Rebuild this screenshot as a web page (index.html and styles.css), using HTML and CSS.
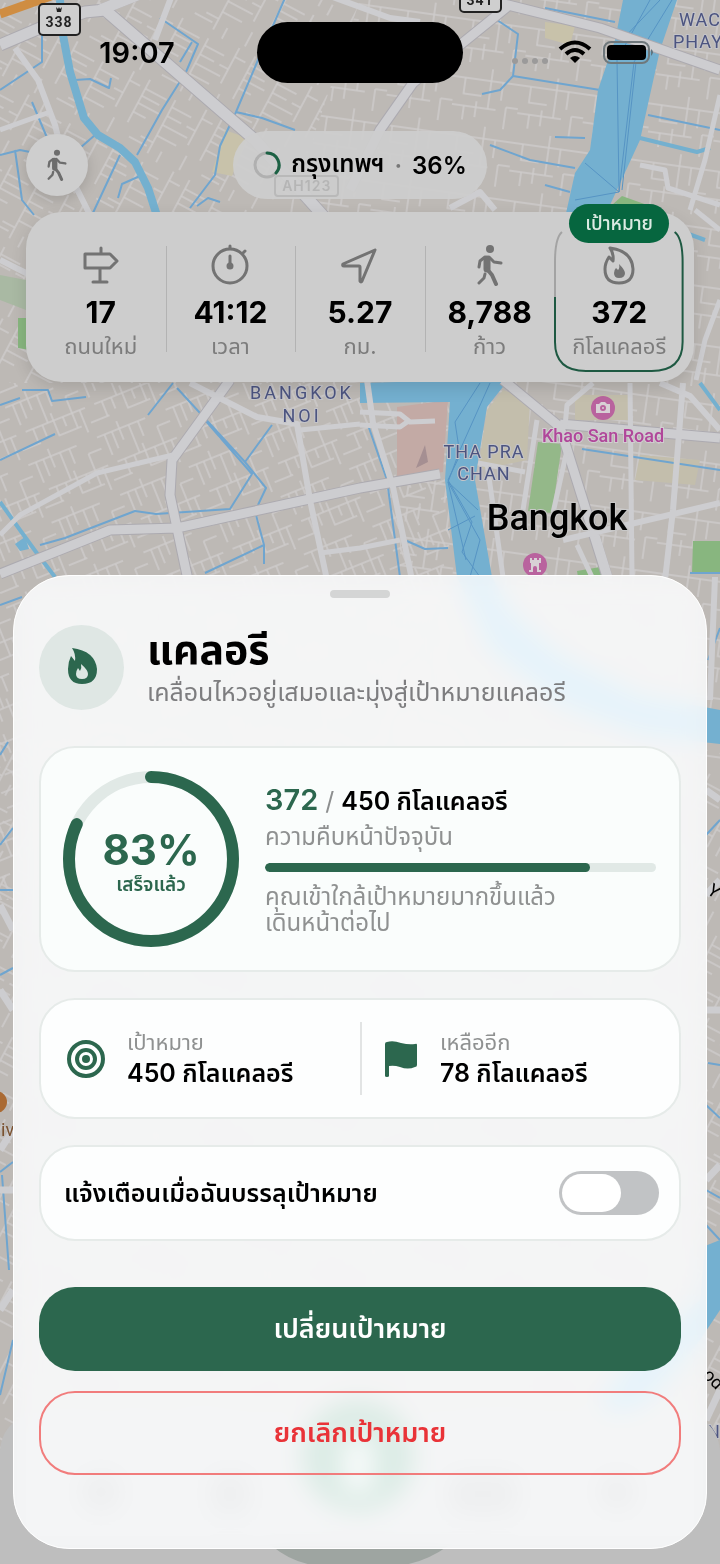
FILE: index.html
```
<!DOCTYPE html>
<html lang="th">
<head>
    <meta charset="UTF-8">
    <meta name="viewport" content="width=device-width, initial-scale=1">
    <title>แคลอรี</title>
    <link rel="stylesheet" href="styles.css">
</head>
<body>
<svg width="0" height="0" class="defs" aria-hidden="true">
    <symbol id="icon-walk" viewBox="0 0 26 42">
        <circle cx="13" cy="5" r="4" fill="currentColor"/>
        <g fill="none" stroke="currentColor" stroke-linecap="round" stroke-linejoin="round">
            <path d="M10 15 L10 25" stroke-width="7"/>
            <path d="M8 13 L3 17 L2 23" stroke-width="3"/>
            <path d="M12 13 L17 18 L24 19" stroke-width="3"/>
            <path d="M10 25 L15 31 L19 40" stroke-width="4"/>
            <path d="M8 30 L7 34 L2 39" stroke-width="3"/>
        </g>
    </symbol>
</svg>
<div class="screen">
    <svg class="map" viewBox="0 0 720 1564" preserveAspectRatio="xMidYMin slice" aria-hidden="true">
        <defs>
            <pattern id="lanes-a" width="74" height="62" patternUnits="userSpaceOnUse" patternTransform="rotate(-22)">
                <path class="lane" d="M0 8 H52 M8 8 V30 M16 8 V26 M24 0 V20 M34 8 V38 M44 8 V24 M10 38 H74 M18 38 V54 M28 38 V50 M40 30 V54 H64 M50 38 V48 M60 20 V54 M60 20 H74 M68 38 V62 M0 54 H20"/>
            </pattern>
            <pattern id="lanes-b" width="82" height="70" patternUnits="userSpaceOnUse" patternTransform="rotate(28)">
                <path class="lane" d="M6 0 V48 M6 10 H30 M6 18 H26 M6 26 H30 M6 36 H20 M38 6 V66 M38 14 H60 M38 24 H54 M38 34 H66 M38 46 H60 M24 54 H38 M70 0 V40 M70 10 H82 M60 24 H70 M14 60 H34 M50 58 V70 M74 50 V66"/>
            </pattern>
            <pattern id="lanes-c" width="66" height="58" patternUnits="userSpaceOnUse" patternTransform="rotate(8)">
                <path class="lane" d="M0 12 H66 M10 12 V28 H28 M36 0 V40 M48 12 V30 M0 40 H44 M12 40 V54 M24 34 V50 M54 36 H66 M54 36 V58"/>
            </pattern>
        </defs>
        <rect width="720" height="1564" fill="#bdb9b5"/>
        <!-- side streets, one pattern per part of town -->
        <path fill="url(#lanes-b)" d="M0 0 H360 L230 383 H0 Z"/>
        <path fill="url(#lanes-c)" d="M360 0 H720 V383 H230 Z"/>
        <path fill="url(#lanes-a)" d="M0 383 H450 V900 H0 Z"/>
        <path fill="url(#lanes-c)" d="M400 383 H720 V760 H400 Z"/>
        <path fill="url(#lanes-b)" d="M0 740 H720 V1564 H0 Z"/>
        <!-- parks and districts -->
        <g>
            <path fill="#c8c2aa" d="M225 130 L247 138 L232 176 L212 172 Z M545 22 L575 26 L570 45 L545 38 Z"/>
            <path fill="#c3beac" d="M503 390 L530 400 L527 460 L478 470 L487 410 Z M575 395 H630 V420 H575 Z M640 455 L700 460 L695 485 L635 480 Z"/>
            <path fill="#c3aaa5" d="M397 407 L448 400 L443 472 L397 479 Z"/>
            <path fill="#a58f92" d="M425 445 L428 462 L416 468 Z"/>
            <path fill="#88b67f" d="M18 318 H30 V350 L18 348 Z M693 541 H720 V573 H692 Z M577 571 L600 567 L602 577 H578 Z M612 205 L622 196 L650 206 Z"/>
            <path fill="#a9b9a3" d="M0 275 L26 280 V310 L0 300 Z"/>
            <path fill="#94b889" d="M538 442 L562 444 L552 513 L528 511 Z"/>
        </g>
        <!-- canals -->
        <g class="canal">
            <path d="M42 30 V62 L0 90 M75 80 L90 79 L109 88 L111 78 M95 135 L80 148 M160 18 L198 44 L186 72 L162 110 L137 155 M192 42 L180 62"/>
            <path d="M285 -2 L258 60 L236 112 L220 146 L215 175 L190 208 M236 112 L262 118 L295 130"/>
            <path d="M0 155 L20 150 L45 155 M15 150 L22 200 L34 215 M32 102 L48 140 M120 155 L92 215 M140 176 L122 184 L118 198 M197 206 L208 198 L220 202"/>
            <path d="M497 20 L518 34 L513 76 L500 90 L482 94 M513 76 L600 90 M545 8 L615 22 M648 115 L720 130 M555 137 L585 138 M490 145 L530 160 L575 168 M545 185 L570 192"/>
            <path d="M0 405 L20 398 M22 390 H48 L52 401 L86 397 M0 460 L55 434 M173 383 L148 415 M177 388 L245 462 L266 488 L258 505 M205 420 L252 474 L230 509 L156 514 L135 511 L65 538 L40 545 M272 425 L245 462 M256 515 L264 545 L205 573 M264 545 V564"/>
            <path d="M368 425 L387 480 L400 577 M407 541 L425 549 L448 548 M582 449 L720 470 M690 573 H720"/>
            <path d="M0 605 L22 597 M0 755 L8 742 M0 845 L13 828 M0 890 H13 M0 975 L13 968 M0 1172 L13 1162 M2 1175 L9 1270 M0 1395 L13 1340 M708 660 L720 628 M706 835 L720 820 M708 1063 L720 1065 M706 1105 L720 1118 M706 1190 L720 1198 M706 1225 L720 1240"/>
        </g>
        <path class="canal-wide" d="M60 0 L62 30 L70 72 L84 118 L98 135 L120 148 L135 162 L148 188 L160 225"/>
        <path class="canal-wide thin" d="M615 205 L645 218 L705 240 M700 383 L720 410 M640 138 L697 152 L710 148 M0 502 L20 530 L36 552 L55 577"/>
        <path class="water" d="M15 544 L25 537 L29 549 L20 551 Z"/>
        <!-- river -->
        <path class="water" d="M623 0 L615 40 L598 90 L590 150 L575 173 L560 240 L500 340 L470 380 L360 383 V403 L450 402 L445 480 L457 577 L490 650 L560 705 L640 735 L720 744 V710 L640 695 L560 655 L510 610 L492 577 L475 480 L487 407 L540 340 L610 205 L640 140 L660 50 L677 0 Z"/>
        <path class="water" d="M720 1240 L705 1246 L700 1300 L640 1350 L600 1400 L610 1420 L650 1400 L700 1340 L720 1310 Z"/>
        <g class="ferry">
            <path d="M650 0 L617 60 L619 192 M672 0 L634 62 L619 192 M660 0 L620 42 M619 192 L585 163 M619 192 L575 200 M636 62 L622 190"/>
            <path d="M480 383 L455 422 L460 455 L448 480 L472 522 L462 552 L480 577 M490 383 L460 450 L448 482 L480 540 L470 577 M448 482 L478 510 M448 482 L466 560 M448 530 L475 516"/>
        </g>
        <!-- main roads -->
        <g class="road-edge">
            <path stroke-width="13" d="M0 45 L40 28 L85 12 L105 10 L255 140 L345 240"/>
            <path d="M100 10 L140 -6 M500 3 L600 28 L720 70 M507 7 L413 83 L380 130 L350 190 M0 574 L110 530 L177 528 L360 488 L440 474 M230 380 L172 460 L170 495 L188 580 M503 380 L560 427 L608 580 M560 424 L720 438"/>
        </g>
        <g class="road">
            <path stroke-width="11" d="M0 45 L40 28 L85 12 L105 10 L255 140 L345 240 M100 10 L140 -6"/>
            <path stroke-width="9" d="M500 3 L600 28 L720 70 M507 7 L413 83 L380 130 L350 190 M0 574 L110 530 L177 528 L360 488 L440 474 M230 380 L172 460 L170 495 L188 580 M503 380 L560 427 L608 580 M560 424 L720 438"/>
            <path stroke-width="6" d="M15 48 L38 80 L55 125 L65 165 L95 225 M172 -5 L155 40 M190 383 L257 417 L297 424 L310 500 L327 580 M367 380 L373 423 L393 487 L412 580 M683 383 L673 510 L665 580 M660 383 L690 396 L720 430 M563 540 L720 503 M715 577 L710 700 M0 260 L30 275 M450 208 L480 192 L495 210 M330 -4 L390 18 L420 22"/>
            <path stroke-width="5" d="M0 130 L50 112 M0 535 L20 515 L97 473 L173 455 M300 430 L360 424 M537 420 L523 510 M567 450 L553 513 M630 383 L632 577 M487 463 L503 577 M478 463 L525 472 M593 383 L567 405 L565 427 M640 165 L665 170 L668 188 L720 205 M720 95 L705 160 L690 210 M695 210 L720 230 M696 380 L705 340 L720 300 M360 412 L400 414 L410 422 L435 421 M360 425 L400 427 L410 420 M320 553 L360 548 L400 540 M577 545 L592 577 M597 535 L610 577"/>
            <path stroke-width="7" d="M0 905 L13 930 M0 990 L13 1010 M0 1150 L13 1130 M0 1190 H13 M0 1310 L13 1290 M706 790 L720 800 M706 895 L720 880 M706 1010 H720 M706 1180 L720 1165 M706 1420 L720 1390"/>
        </g>
        <path d="M0 14 L65 -9" stroke="#cf8d42" stroke-width="9" fill="none"/>
        <!-- road shields -->
        <g class="shield">
            <rect x="39" y="4" width="41" height="31" rx="4"/>
            <text x="59" y="27">338</text>
            <path d="M56 7 l2 2 l1 -2 l1 2 l2 -2 l-1 5 h-4 Z" fill="#222" stroke="none"/>
            <rect x="460" y="-19" width="41" height="31" rx="4"/>
            <text x="480" y="5">341</text>
        </g>
        <!-- place names -->
        <g class="place">
            <text x="302" y="399" letter-spacing="3">BANGKOK</text>
            <text x="302" y="422" letter-spacing="3">NOI</text>
            <text x="484" y="458">THA PRA</text>
            <text x="484" y="480">CHAN</text>
            <text x="700" y="26">WAC</text>
            <text x="698" y="48">PHAY</text>
            <text x="714" y="1438">N</text>
        </g>
        <text class="poi" x="603" y="442">Khao San Road</text>
        <text class="city" x="557" y="530">Bangkok</text>
        <text class="poi-food" x="1" y="1136">iv</text>
        <text class="street" x="706" y="893" transform="rotate(35 706 893)">Y</text>
        <text class="street" x="702" y="1376" transform="rotate(45 702 1376)">od</text>
        <g fill="#b9639e">
            <circle cx="603" cy="408" r="12"/>
            <circle cx="535" cy="565" r="12"/>
        </g>
        <circle cx="-4" cy="1102" r="11" fill="#aa6a33"/>
        <path fill="#d8d0d5" d="M596 404 H599 L601 402 H605 L607 404 H610 V413 H596 Z"/>
        <circle cx="603" cy="408" r="2" fill="#d8d0d5" stroke="#b9639e" stroke-width="2"/>
        <path fill="#d8d0d5" d="M530 558 h2 v2 h2 v-2 h3 v2 h2 v-2 h2 v5 h-2 v7 h2 v2 h-4 v-4 a2 2 0 0 0 -4 0 v4 h-4 v-2 h2 v-7 h-1 Z"/>
        <!-- tab bar and record button behind the sheet -->
        <path fill="#bebebe" d="M0 1450 Q4 1410 60 1410 H660 Q716 1410 720 1450 V1564 H0 Z"/>
        <circle cx="358" cy="1456" r="56" fill="#37835f"/>
        <rect x="343" y="1438" width="30" height="54" fill="#d0dad4"/>
        <g fill="#999">
            <circle cx="101" cy="1492" r="20"/>
            <rect x="212" y="1474" width="36" height="40"/>
            <rect x="450" y="1474" width="66" height="40"/>
            <circle cx="617" cy="1492" r="18"/>
        </g>
        <path fill="#9ea5a1" d="M272 1546 H448 Q420 1566 390 1566 H326 Q296 1566 272 1546 Z"/>
    </svg>

    <header class="status-bar">
        <span class="time">19:07</span>
        <span class="island"></span>
        <svg class="status-icons" viewBox="0 0 144 30" width="144" height="30" aria-hidden="true">
            <g fill="#9b9a9a">
                <circle cx="5" cy="23" r="3"/>
                <circle cx="15" cy="23" r="3"/>
                <circle cx="25" cy="23" r="3"/>
                <circle cx="35" cy="23" r="3"/>
            </g>
            <g fill="none" stroke="#000" stroke-width="4">
                <path d="M50 11 Q65 -2 80 11"/>
                <path d="M56 16 Q65 8 74 16"/>
            </g>
            <path d="M60 20 Q65 16 70 20 L65 25 Z"/>
            <rect x="94" y="4" width="45" height="21" rx="7" fill="none" stroke="#6f787c" stroke-width="2"/>
            <rect x="97" y="7" width="39" height="15" rx="4"/>
            <path d="M141 11 q4 3 0 7 Z" fill="#5d7480"/>
        </svg>
    </header>

    <nav class="top-bar">
        <button class="mode" type="button" aria-label="เดิน">
            <svg width="20" height="32"><use href="#icon-walk"/></svg>
        </button>
        <a class="area" href="#">
            <span class="shield-ghost">AH123</span>
            <svg width="28" height="28" viewBox="0 0 28 28" aria-hidden="true">
                <circle cx="14" cy="14" r="12" fill="none" stroke="#b0b0b0" stroke-width="3"/>
                <path d="M14 2 A12 12 0 0 1 23 22" fill="none" stroke="#1c6144" stroke-width="3" stroke-linecap="round"/>
            </svg>
            <span>กรุงเทพฯ</span>
            <span class="dot">·</span>
            <span>36%</span>
        </a>
    </nav>

    <section class="stats">
        <div class="stat">
            <svg class="stat-icon" viewBox="0 0 42 42">
                <path d="M21 4 V9 M5 10 H30 L37 17 L30 24 H5 Z M20 24 V38 M13 38 H27"/>
            </svg>
            <strong>17</strong>
            <span>ถนนใหม่</span>
        </div>
        <div class="stat">
            <svg class="stat-icon" viewBox="0 0 42 42">
                <circle cx="21" cy="22" r="17"/>
                <path d="M21 4 V2 M34 9 L36 7 M21 12 V22"/>
                <circle cx="21" cy="22" r="2"/>
            </svg>
            <strong>41:12</strong>
            <span>เวลา</span>
        </div>
        <div class="stat">
            <svg class="stat-icon" viewBox="0 0 42 42">
                <path d="M36 6 L4 20 Q3 22 5 22 H20 Q21 22 21 23 V37 Q22 39 23 37 Z"/>
            </svg>
            <strong>5.27</strong>
            <span>กม.</span>
        </div>
        <div class="stat">
            <svg class="walk-icon" width="26" height="42"><use href="#icon-walk"/></svg>
            <strong>8,788</strong>
            <span>ก้าว</span>
        </div>
        <div class="stat stat-goal">
            <svg class="goal-frame" viewBox="0 0 130 148" preserveAspectRatio="none" aria-hidden="true">
                <path d="M1 73 V38 Q1 14 8 8" stroke="#a3a3a3"/>
                <path d="M121 8 Q129 14 129 38 V118 Q129 147 98 147 H32 Q1 147 1 118 V73" stroke="#1e5942"/>
            </svg>
            <span class="badge">เป้าหมาย</span>
            <svg class="stat-icon" viewBox="0 0 42 42">
                <path d="M12 4 Q34 7 35 25 Q35 39 21 39 Q7 39 7 25 Q7 19 11 13 L15 17 Q16 10 12 4 Z"/>
                <path class="solid" d="M21 20 Q27 26 27 29 Q27 34 21 34 Q16 34 16 29 Q16 26 18 24 L20 26 Q22 24 21 20 Z"/>
            </svg>
            <strong>372</strong>
            <span>กิโลแคลอรี</span>
        </div>
    </section>

    <main class="sheet">
        <div class="handle"></div>
        <div class="sheet-head">
            <span class="sheet-icon">
                <svg width="30" height="38" viewBox="0 0 30 38" aria-hidden="true">
                    <path fill="#2c674e" d="M5 0 Q28 3 30 21 Q30 36 15 36 Q1 36 1 21 Q1 14 4 8 L8 13 Q9 6 5 0 Z"/>
                    <path fill="#dde7e3" d="M14 16 Q21 22 21 26 Q21 31 15 31 Q9 31 9 26 Q9 23 11 20 L13 23 Q15 20 14 16 Z"/>
                </svg>
            </span>
            <div>
                <h1>แคลอรี</h1>
                <p>เคลื่อนไหวอยู่เสมอและมุ่งสู่เป้าหมายแคลอรี</p>
            </div>
        </div>

        <section class="card progress-card">
            <div class="ring">
                <svg viewBox="0 0 178 178" width="178" height="178" aria-hidden="true">
                    <circle class="ring-track" cx="89" cy="89" r="82"/>
                    <circle class="ring-fill" cx="89" cy="89" r="82" pathLength="100" stroke-dasharray="82 100" transform="rotate(-90 89 89)"/>
                </svg>
                <div class="ring-text">
                    <strong>83%</strong>
                    <span>เสร็จแล้ว</span>
                </div>
            </div>
            <div class="progress-info">
                <p class="amount"><strong>372</strong> <i>/</i> <b>450 กิโลแคลอรี</b></p>
                <p class="caption">ความคืบหน้าปัจจุบัน</p>
                <div class="bar"><div class="bar-fill" style="width: 83%"></div></div>
                <p class="note">คุณเข้าใกล้เป้าหมายมากขึ้นแล้ว<br>เดินหน้าต่อไป</p>
            </div>
        </section>

        <section class="card goal-card">
            <div class="goal">
                <svg width="38" height="38" viewBox="0 0 38 38" aria-hidden="true">
                    <g fill="none" stroke="#2c674e" stroke-width="4">
                        <circle cx="19" cy="19" r="17"/>
                        <circle cx="19" cy="19" r="9"/>
                    </g>
                    <circle cx="19" cy="19" r="4" fill="#2c674e"/>
                </svg>
                <p><span>เป้าหมาย</span><b>450 กิโลแคลอรี</b></p>
            </div>
            <div class="goal">
                <svg width="34" height="38" viewBox="0 0 34 38" aria-hidden="true">
                    <path fill="#2c674e" d="M1 4 Q1 2 3 2 Q9 0 17 3 Q25 5 31 4 Q33 3 33 5 V25 Q33 27 31 27 Q24 30 16 27 Q10 25 5 26 V36 Q5 37 3 37 Q1 37 1 36 Z"/>
                </svg>
                <p><span>เหลืออีก</span><b>78 กิโลแคลอรี</b></p>
            </div>
        </section>

        <section class="card notify-card">
            <label for="notify">แจ้งเตือนเมื่อฉันบรรลุเป้าหมาย</label>
            <input id="notify" class="switch" type="checkbox" role="switch">
        </section>

        <button class="btn btn-primary" type="button">เปลี่ยนเป้าหมาย</button>
        <button class="btn btn-danger" type="button">ยกเลิกเป้าหมาย</button>
    </main>
</div>
</body>
</html>
```

FILE: styles.css
```
* {
    box-sizing: border-box;
    margin: 0;
    padding: 0;
}
body {
    font-family: Inter, "Noto Sans Thai", "Noto Sans", sans-serif;
    color: #000;
    background-color: #bdb9b5;
}
a {
    text-decoration: none;
    color: inherit;
}
button {
    border: 0;
    font: inherit;
    cursor: pointer;
}
.defs {
    position: absolute;
}
.screen {
    position: relative;
    min-height: 100vh;
    padding: 22px 13px 13px;
    overflow: hidden;
}

/* map */
.map {
    position: absolute;
    left: 0;
    top: 0;
    width: 100%;
    height: 100%;
    font-family: Roboto, sans-serif;
}
.lane {
    fill: none;
    stroke: #cecccb;
    stroke-width: 1.5;
}
.canal {
    fill: none;
    stroke: #6fa5cf;
    stroke-width: 2;
    stroke-linejoin: round;
}
.canal-wide {
    fill: none;
    stroke: #74b0cf;
    stroke-width: 8;
    stroke-linejoin: round;
}
.canal-wide.thin {
    stroke-width: 4;
}
.water {
    fill: #74b0d0;
}
.ferry {
    fill: none;
    stroke: #5694c4;
    stroke-width: 1;
}
.road-edge {
    fill: none;
    stroke: #acaab0;
    stroke-width: 11;
    stroke-linejoin: round;
}
.road {
    fill: none;
    stroke: #cdcdd0;
    stroke-linejoin: round;
}
.shield {
    fill: #cfcfcf;
    stroke: #222;
    stroke-width: 2;
}
.shield text {
    fill: #222;
    stroke: none;
    font-size: 14px;
    font-weight: 700;
    text-anchor: middle;
    letter-spacing: 1px;
}
.place {
    fill: #4c5480;
    font-size: 18px;
    letter-spacing: 1px;
    text-anchor: middle;
    stroke: #c4c4c8;
    stroke-width: 2;
    paint-order: stroke;
}
.poi {
    fill: #b0479a;
    font-size: 18px;
    font-weight: 500;
    text-anchor: middle;
    stroke: #d0ccd0;
    stroke-width: 2;
    paint-order: stroke;
}
.poi-food {
    fill: #7b5230;
    font-size: 18px;
}
.city {
    font-size: 36px;
    font-weight: 500;
    text-anchor: middle;
    stroke: #c8c8c8;
    stroke-width: 2;
    paint-order: stroke;
}
.street {
    font-size: 18px;
}

/* status bar */
.status-bar {
    position: relative;
    display: grid;
    grid-template-columns: 1fr 206px 1fr;
    align-items: center;
}
.time {
    font-size: 29px;
    font-weight: 600;
    justify-self: center;
    padding-left: 4px;
}
.island {
    height: 61px;
    border-radius: 31px;
    background-color: #000;
}
.status-icons {
    justify-self: center;
    margin-right: 6px;
}

/* top bar */
.top-bar {
    position: relative;
    display: grid;
    grid-template-columns: 1fr auto 1fr;
    align-items: center;
    margin: 48px 13px 0;
}
.mode {
    display: flex;
    align-items: center;
    justify-content: center;
    width: 62px;
    height: 62px;
    border-radius: 50%;
    color: #6d6d6d;
    background-color: #cecece;
    box-shadow: 0 4px 14px rgba(0, 0, 0, 0.15);
}
.area {
    position: relative;
    display: flex;
    align-items: center;
    gap: 10px;
    height: 68px;
    padding: 0 20px;
    border-radius: 34px;
    font-size: 24px;
    font-weight: 600;
    background-color: rgba(205, 205, 205, 0.94);
}
.area > span,
.area > svg {
    position: relative;
}
.dot {
    color: #777;
}
.area > .shield-ghost {
    position: absolute;
    left: 41px;
    bottom: 2px;
    padding: 0 6px;
    border: 2px solid #b9b9b9;
    border-radius: 4px;
    font-size: 14px;
    line-height: 18px;
    letter-spacing: 1px;
    color: #b5b5b5;
}

/* stats */
.stats {
    position: relative;
    display: grid;
    grid-template-columns: repeat(5, 1fr);
    margin: 13px 13px 0;
    padding: 12px 10px 10px;
    border-radius: 36px;
    background-color: #cdcdcd;
    box-shadow: 0 6px 16px rgba(0, 0, 0, 0.12);
}
.stat {
    position: relative;
    display: flex;
    flex-direction: column;
    align-items: center;
    padding: 20px 0 12px;
}
.stat:not(.stat-goal):not(:first-child)::before {
    content: "";
    position: absolute;
    left: 0;
    top: 22px;
    bottom: 20px;
    width: 1px;
    background-color: #b3b3b3;
}
.stat-icon {
    width: 42px;
    height: 42px;
    fill: none;
    stroke: #737373;
    stroke-width: 3;
    stroke-linecap: round;
    stroke-linejoin: round;
}
.stat-icon .solid {
    fill: #737373;
    stroke: none;
}
.walk-icon {
    color: #737373;
}
.stat strong {
    margin-top: 8px;
    font-size: 30px;
    line-height: 36px;
    font-weight: 700;
}
.stat > span {
    margin-top: 2px;
    font-size: 22px;
    line-height: 28px;
    color: #7c7c7c;
    white-space: nowrap;
}
.goal-frame {
    position: absolute;
    left: 0;
    top: 0;
    width: 100%;
    height: 100%;
    fill: none;
    stroke-width: 2;
}
.stat > .badge {
    position: absolute;
    left: 50%;
    top: -20px;
    transform: translateX(-50%);
    width: 100px;
    margin: 0;
    border-radius: 20px;
    font-size: 19px;
    line-height: 39px;
    font-weight: 500;
    text-align: center;
    color: #dcebe3;
    background-color: #06663f;
}

/* sheet */
.sheet {
    position: relative;
    margin-top: 193px;
    padding: 14px 25px 73px;
    border: 1px solid #fff;
    border-radius: 56px;
    background-color: rgba(248, 249, 250, 0.86);
    backdrop-filter: blur(12px) saturate(1.2) brightness(1.15);
}
.handle {
    width: 60px;
    height: 8px;
    margin: 0 auto;
    border-radius: 4px;
    background-color: #d4d5d5;
}
.sheet-head {
    display: flex;
    align-items: center;
    gap: 23px;
    margin-top: 26px;
}
.sheet-icon {
    display: flex;
    align-items: center;
    justify-content: center;
    flex: none;
    width: 85px;
    height: 85px;
    border-radius: 50%;
    background-color: #dfe7e4;
}
.sheet-head h1 {
    font-size: 41px;
    line-height: 50px;
    font-weight: 700;
}
.sheet-head p {
    font-size: 25px;
    line-height: 36px;
    color: #7d7d7f;
}
.card {
    margin-top: 26px;
    border: 2px solid #e6ebe9;
    border-radius: 36px;
    background-color: #fdfefe;
}
.progress-card {
    display: flex;
    align-items: center;
    gap: 25px;
    margin-top: 36px;
    padding: 22px 23px 22px 21px;
    background-color: #fafdfc;
}
.ring {
    position: relative;
    flex: none;
    width: 178px;
    height: 178px;
}
.ring-track,
.ring-fill {
    fill: none;
    stroke: #e1e9e6;
    stroke-width: 12;
}
.ring-fill {
    stroke: #2c674e;
    stroke-linecap: round;
}
.ring-text {
    position: absolute;
    left: 0;
    top: 58px;
    width: 100%;
    text-align: center;
    color: #2c674e;
}
.ring-text strong {
    display: block;
    font-size: 42px;
    line-height: 44px;
    font-weight: 700;
}
.ring-text span {
    display: block;
    font-size: 19px;
    line-height: 26px;
    font-weight: 600;
}
.progress-info {
    flex: 1;
}
.amount {
    font-size: 25px;
    line-height: 36px;
}
.amount strong {
    font-size: 29px;
    color: #2c674e;
    font-weight: 600;
}
.amount i {
    font-style: normal;
    color: #8d8f8f;
}
.amount b,
.goal b {
    font-weight: 600;
}
.caption,
.note {
    font-size: 24px;
    line-height: 36px;
    color: #8f9191;
}
.note {
    line-height: 26px;
    margin-top: 12px;
}
.bar {
    height: 9px;
    margin-top: 8px;
    border-radius: 5px;
    background-color: #e1e9e6;
    overflow: hidden;
}
.bar-fill {
    height: 100%;
    border-radius: 5px;
    background-color: #2c674e;
}
.goal-card {
    display: grid;
    grid-template-columns: 1fr 1fr;
    padding: 22px 0;
}
.goal {
    display: flex;
    align-items: center;
    gap: 22px;
    height: 73px;
    padding-left: 26px;
}
.goal + .goal {
    padding-left: 22px;
    border-left: 2px solid #e2e4e4;
}
.goal span,
.goal b {
    display: block;
    white-space: nowrap;
}
.goal span {
    font-size: 22px;
    line-height: 28px;
    color: #8f9191;
}
.goal b {
    font-size: 25px;
    line-height: 34px;
}
.notify-card {
    display: flex;
    align-items: center;
    justify-content: space-between;
    padding: 24px 20px 24px 23px;
}
.notify-card label {
    font-size: 25px;
    line-height: 34px;
    font-weight: 600;
}
.switch {
    position: relative;
    appearance: none;
    width: 100px;
    height: 44px;
    border-radius: 22px;
    background-color: #c1c3c5;
    cursor: pointer;
}
.switch::before {
    content: "";
    position: absolute;
    left: 3px;
    top: 3px;
    width: 59px;
    height: 38px;
    border-radius: 19px;
    background-color: #fff;
}
.switch:checked {
    background-color: #2c674e;
}
.switch:checked::before {
    left: 38px;
}
.btn {
    display: block;
    width: 100%;
    height: 84px;
    border-radius: 36px;
    font-size: 27px;
    font-weight: 600;
}
.btn-primary {
    margin-top: 46px;
    color: #fff;
    background-color: #2c674e;
}
.btn-danger {
    margin-top: 20px;
    border: 2px solid #f17c7c;
    color: #e93338;
    background-color: transparent;
}
```
